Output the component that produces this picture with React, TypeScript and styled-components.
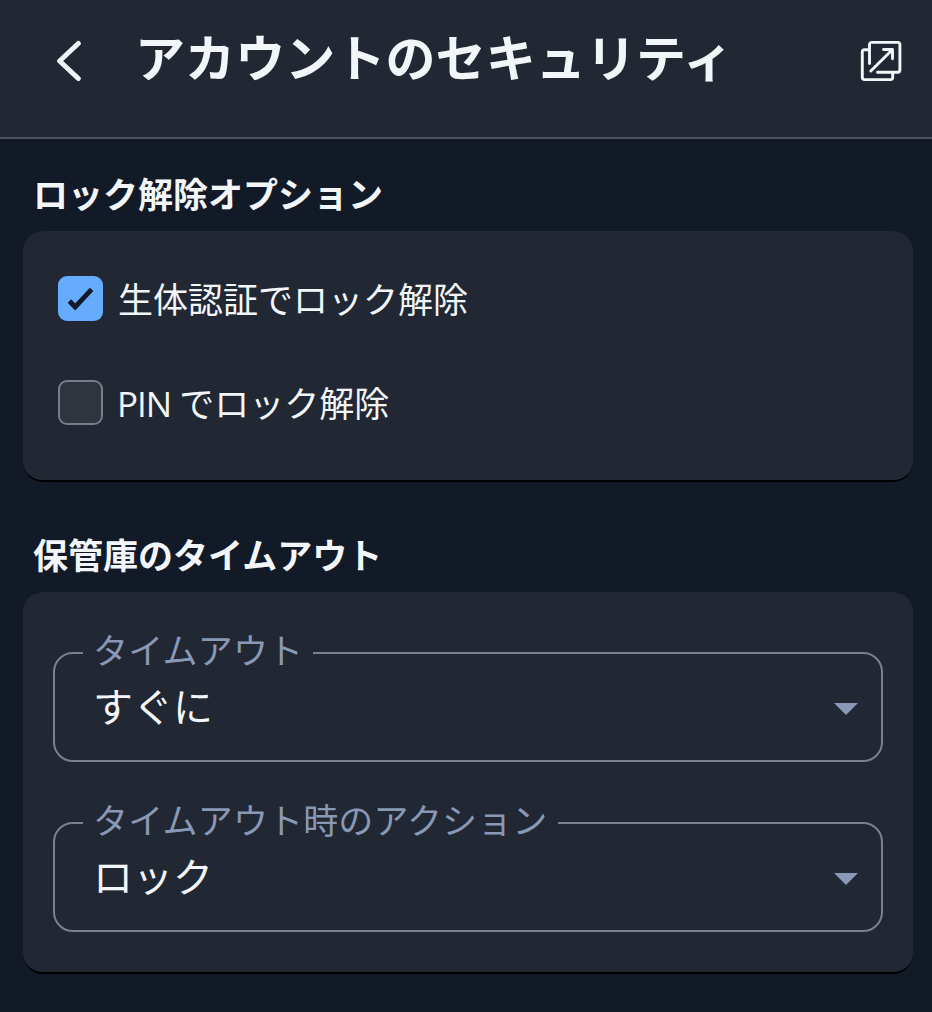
import React from "react";
import styled, { createGlobalStyle } from "styled-components";

const GlobalStyle = createGlobalStyle`
  *, *::before, *::after { box-sizing: border-box; }
  body {
    margin: 0;
    background: #121a27;
    color: #f3f6f9;
    font-family: "Open Sans", "Noto Sans CJK JP", sans-serif;
  }
`;

const Page = styled.div`
  display: flex;
  flex-direction: column;
  height: 1012px;
  overflow: hidden;
  background: #121a27;
`;

const Header = styled.header`
  display: flex;
  align-items: flex-start;
  flex: none;
  height: 139px;
  padding: 0 30px 0 56px;
  background: #212733;
  border-bottom: 2px solid #4c525f;
`;

const IconButton = styled.button<{ $width: number }>`
  display: flex;
  flex: none;
  width: ${(p) => p.$width}px;
  margin: 40px 0 0;
  padding: 0;
  border: 0;
  background: none;
  color: #f3f6f9;
`;

const Title = styled.h1`
  flex: 1;
  margin: 0 0 0 50px;
  font-size: 50px;
  font-weight: 700;
  letter-spacing: 0.1px;
  line-height: 116px;
  white-space: nowrap;
`;

const Main = styled.main`
  display: flex;
  flex-direction: column;
  padding: 31px 19px 0 23px;
`;

const SectionTitle = styled.h2`
  margin: 0 0 11px;
  padding-left: 10px;
  font-size: 35px;
  font-weight: 700;
  line-height: 50px;
  white-space: nowrap;
`;

const Card = styled.section<{ $height: number; $padding: string }>`
  display: flex;
  flex-direction: column;
  height: ${(p) => p.$height}px;
  margin-bottom: 49px;
  padding: ${(p) => p.$padding};
  background: #212733;
  border-radius: 20px;
  border-bottom: 2px solid #000;
`;

const Option = styled.label`
  display: flex;
  align-items: center;
  gap: 15px;
  height: 45px;
  margin-bottom: 59px;
`;

const OptionText = styled.span`
  padding-top: 2px;
  font-size: 35px;
  line-height: 45px;
  white-space: pre;
`;

const Latin = styled.span`
  margin-left: -1px;
  letter-spacing: -1px;
`;

const Box = styled.span<{ $checked: boolean }>`
  display: flex;
  flex: none;
  align-items: center;
  justify-content: center;
  width: 45px;
  height: 45px;
  border-radius: 9px;
  border: ${(p) => (p.$checked ? "0" : "2px solid #777d8a")};
  background: ${(p) => (p.$checked ? "#65abff" : "#30343d")};
`;

const Field = styled.fieldset`
  min-width: 0;
  height: 110px;
  margin: 0 0 60px;
  padding: 0 23px 0 28px;
  border: 2px solid #7b808c;
  border-radius: 20px;
`;

const Legend = styled.legend`
  height: 2px;
  padding: 0 10px;
  color: #8898b5;
  font-size: 35px;
  letter-spacing: 0.15px;
  line-height: 2px;
  white-space: nowrap;
`;

const LegendText = styled.span`
  position: relative;
  top: -2px;
`;

const FieldBody = styled.div`
  display: flex;
  align-items: center;
  justify-content: space-between;
  height: 106px;
  padding-left: 10px;
`;

const Value = styled.span`
  font-size: 40px;
  line-height: 60px;
  white-space: nowrap;
`;

const Arrow = styled.svg`
  flex: none;
  margin-top: 3px;
`;

const BackIcon = () => (
  <svg width="26" height="42" viewBox="0 0 26 42" fill="none" stroke="currentColor" strokeWidth="5" strokeLinecap="round" strokeLinejoin="round">
    <path d="M22.300 3.500 3.600 21l18.700 17.500" />
  </svg>
);

const PopOutIcon = () => (
  <svg width="42" height="42" viewBox="0 0 42 42" fill="none" stroke="currentColor" strokeWidth="2.900" strokeLinecap="round" strokeLinejoin="round">
    <path d="M9.500 23.500V4.600a2.200 2.200 0 0 1 2.200-2.200h26a2.200 2.200 0 0 1 2.200 2.200v25.400a2.200 2.200 0 0 1-2.200 2.200H17.500" />
    <path d="M8.500 9.800H4.600a2.300 2.300 0 0 0-2.300 2.300v25.200a2.300 2.300 0 0 0 2.300 2.300h25.800a2.300 2.300 0 0 0 2.300-2.300v-4" />
    <path d="M10.800 31 32.300 9.800M23.500 9.500h9v9.200" />
  </svg>
);

const CheckMark = () => (
  <svg width="45" height="45" viewBox="0 0 45 45" fill="none" stroke="#121a27" strokeWidth="4.800">
    <path d="M11.400 25 17.200 31 33.600 13.300" />
  </svg>
);

const Select = ({ label, value }: { label: string; value: string }) => (
  <Field>
    <Legend>
      <LegendText>{label}</LegendText>
    </Legend>
    <FieldBody>
      <Value>{value}</Value>
      <Arrow width="24" height="12" viewBox="0 0 24 12">
        <path d="M0 0h24L12 12z" fill="#8898b5" />
      </Arrow>
    </FieldBody>
  </Field>
);

export default function App() {
  return (
    <>
      <GlobalStyle />
      <Page>
        <Header>
          <IconButton $width={29} aria-label="戻る">
            <BackIcon />
          </IconButton>
          <Title>アカウントのセキュリティ</Title>
          <IconButton $width={42} aria-label="新しいウィンドウで開く">
            <PopOutIcon />
          </IconButton>
        </Header>
        <Main>
          <SectionTitle>ロック解除オプション</SectionTitle>
          <Card $height={251} $padding="45px 35px 0">
            <Option>
              <Box $checked>
                <CheckMark />
              </Box>
              <OptionText>生体認証でロック解除</OptionText>
            </Option>
            <Option>
              <Box $checked={false} />
              <OptionText>
                <Latin>PIN </Latin>でロック解除
              </OptionText>
            </Option>
          </Card>
          <SectionTitle>保管庫のタイムアウト</SectionTitle>
          <Card $height={382} $padding="60px 30px 0">
            <Select label="タイムアウト" value="すぐに" />
            <Select label="タイムアウト時のアクション" value="ロック" />
          </Card>
        </Main>
      </Page>
    </>
  );
}
